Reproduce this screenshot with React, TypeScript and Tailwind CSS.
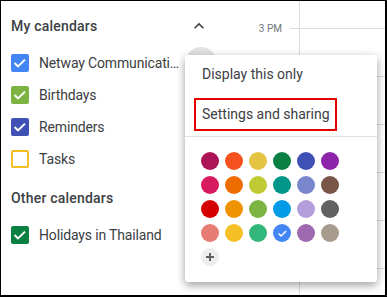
import React from 'react'

type Cal = {
  name: string
  box: string
  checked: boolean
  hovered?: boolean
}

const mine: Cal[] = [
  { name: 'Netway Communication', box: 'bg-[#4285f4] border-[#4285f4]', checked: true, hovered: true },
  { name: 'Birthdays', box: 'bg-[#7cb342] border-[#7cb342]', checked: true },
  { name: 'Reminders', box: 'bg-[#3f51b5] border-[#3f51b5]', checked: true },
  { name: 'Tasks', box: 'bg-white border-[#f6bf26]', checked: false },
]

const others: Cal[] = [{ name: 'Holidays in Thailand', box: 'bg-[#0b8043] border-[#0b8043]', checked: true }]

const palette = [
  ['bg-[#ad1457]', 'bg-[#f4511e]', 'bg-[#e4c441]', 'bg-[#0b8043]', 'bg-[#3f51b5]', 'bg-[#8e24aa]'],
  ['bg-[#d81b60]', 'bg-[#ef6c00]', 'bg-[#c0ca33]', 'bg-[#009688]', 'bg-[#7986cb]', 'bg-[#795548]'],
  ['bg-[#d50000]', 'bg-[#f09300]', 'bg-[#7cb342]', 'bg-[#039be5]', 'bg-[#b39ddb]', 'bg-[#616161]'],
  ['bg-[#e67c73]', 'bg-[#f6bf26]', 'bg-[#33b679]', 'bg-[#4285f4]', 'bg-[#9e69af]', 'bg-[#a79b8e]'],
]

const selected = 'bg-[#4285f4]'

function Check({ className }: { className?: string }) {
  return (
    <svg viewBox="0 0 18 18" className={className} fill="none" stroke="white" strokeWidth={2}>
      <path d="M3.6 9l3.4 3.4L14 5.6" />
    </svg>
  )
}

function ChevronUp() {
  return (
    <svg viewBox="0 0 24 24" className="w-[20px] h-[20px]" fill="#3c4043">
      <path d="M12 8l-6 6 1.41 1.41L12 10.83l4.59 4.58L18 14z" />
    </svg>
  )
}

function SectionHeader({ title }: { title: string }) {
  return (
    <div className="h-[32px] flex items-center justify-between pr-[18px]">
      <span className="text-[14px] font-medium text-[#3c4043] tracking-[0.2px]">{title}</span>
      <button className="w-[20px] h-[20px] flex items-center justify-center">
        <ChevronUp />
      </button>
    </div>
  )
}

function CalRow({ cal }: { cal: Cal }) {
  return (
    <div className="h-[32px] flex items-center pr-[10px]">
      <span className={`w-[18px] h-[18px] shrink-0 rounded-[2px] border-2 flex items-center justify-center ${cal.box}`}>
        {cal.checked && <Check className="w-[18px] h-[18px] shrink-0" />}
      </span>
      <span className="ml-[10px] flex-1 min-w-0 truncate text-[14px] tracking-[-0.15px] text-[#3c4043]">{cal.name}</span>
      {cal.hovered && <span className="ml-[5px] w-[32px] h-[32px] shrink-0 rounded-full bg-[#e3e3e3]" />}
    </div>
  )
}

function ColorMenu() {
  return (
    <div className="absolute left-[184px] top-[54px] w-[192px] bg-white rounded-[3px] pt-[3px] pb-[16px] shadow-[0_4px_8px_rgba(0,0,0,0.28),0_1px_10px_rgba(0,0,0,0.12)] text-[14px] text-[#3c4043]">
      <div className="h-[32px] flex items-center pl-[17px]">Display this only</div>
      <div className="mt-[8px] ml-[9px] w-[143px] h-[33px] border-2 border-[#e60000] flex items-center pl-[6px]">
        Settings and sharing
      </div>
      <div className="mt-[5px] h-px bg-[#e0e0e0]" />
      <div className="mt-[15px] pl-[16px] flex flex-col gap-[6px]">
        {palette.map((row, i) => (
          <div key={i} className="flex gap-[6px]">
            {row.map((c) => (
              <span key={c} className={`w-[18px] h-[18px] rounded-full flex items-center justify-center ${c}`}>
                {c === selected && <Check className="w-[13px] h-[13px]" />}
              </span>
            ))}
          </div>
        ))}
        <div className="flex">
          <span className="w-[18px] h-[18px] rounded-full bg-[#eeeeee] flex items-center justify-center">
            <svg viewBox="0 0 10 10" className="w-[10px] h-[10px]" stroke="#5f6368" strokeWidth={2}>
              <path d="M5 1v8M1 5h8" />
            </svg>
          </span>
        </div>
      </div>
    </div>
  )
}

export default function App() {
  return (
    <div className="relative w-[387px] h-[297px] flex bg-white border-t border-l border-r-2 border-b-2 border-black overflow-hidden font-['Roboto','Liberation_Sans',sans-serif]">
      <aside className="w-[226px] shrink-0 pl-[10px] pt-[9px]">
        <SectionHeader title="My calendars" />
        <div className="mt-[5px]">
          {mine.map((c) => (
            <CalRow key={c.name} cal={c} />
          ))}
        </div>
        <div className="mt-[7px]">
          <SectionHeader title="Other calendars" />
        </div>
        <div className="mt-[5px]">
          {others.map((c) => (
            <CalRow key={c.name} cal={c} />
          ))}
        </div>
      </aside>

      <div className="w-[72px] shrink-0">
        <div className="mt-[21px] h-[13px] flex items-center justify-end gap-[8px]">
          <span className="text-[10px] leading-[13px] text-[#70757a]">3 PM</span>
          <span className="w-[9px] h-px bg-[#dadce0]" />
        </div>
      </div>

      <div className="flex-1 border-l border-[#dadce0] pt-[27px] flex flex-col overflow-hidden">
        {[0, 1, 2, 3, 4, 5].map((h) => (
          <div key={h} className="h-[48px] shrink-0 border-t border-[#dadce0]" />
        ))}
      </div>

      <ColorMenu />
    </div>
  )
}
